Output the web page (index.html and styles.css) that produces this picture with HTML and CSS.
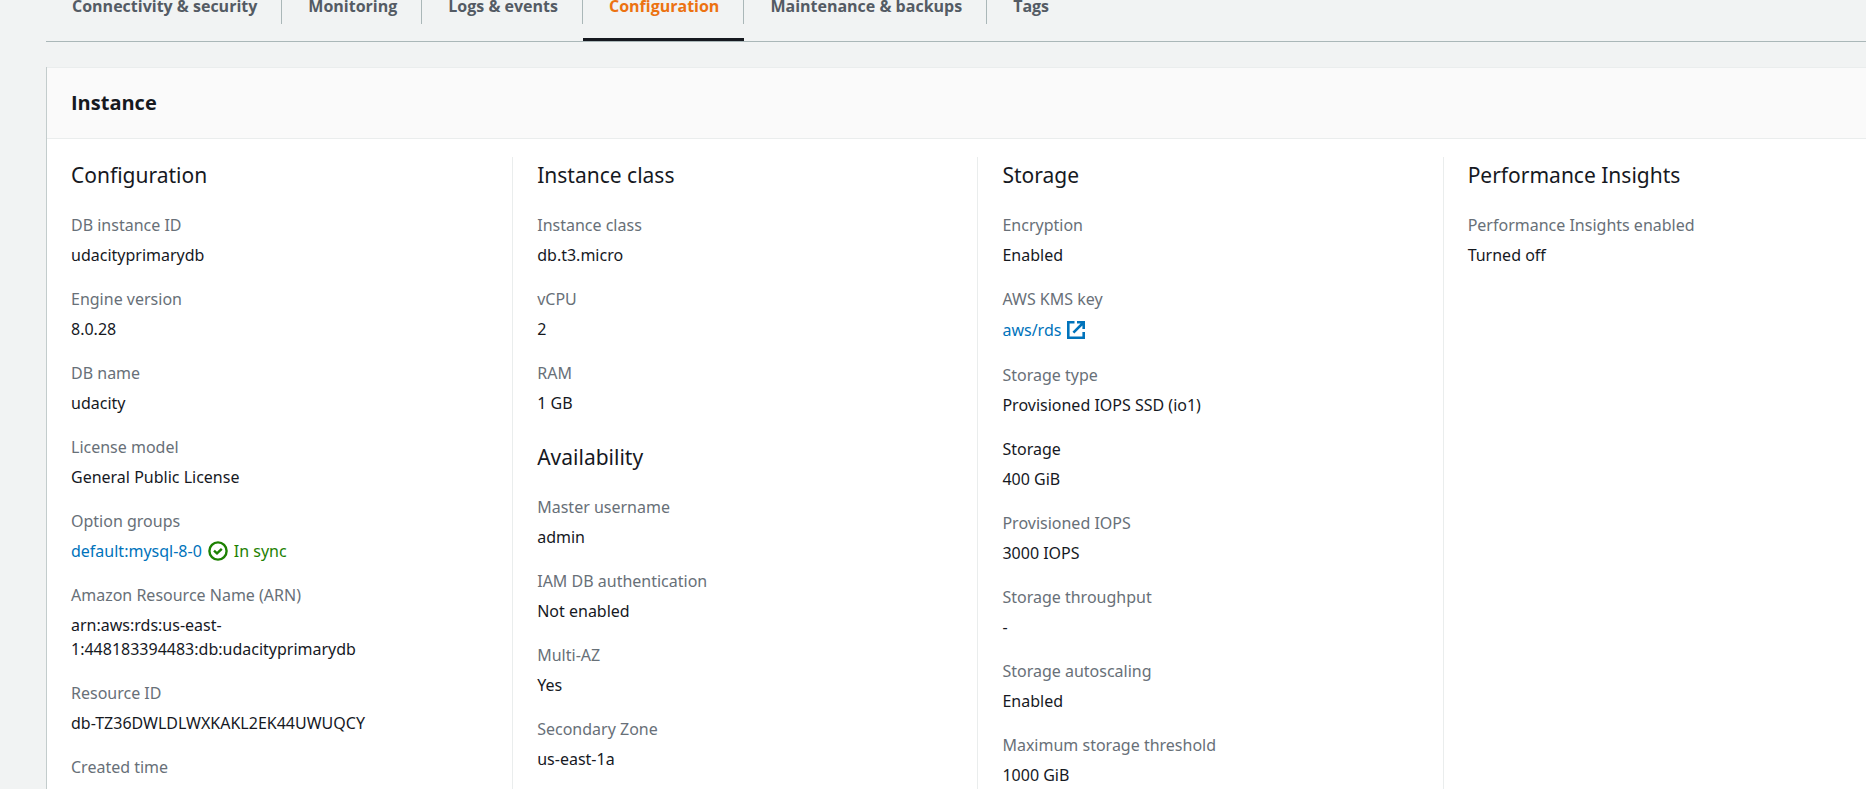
FILE: index.html
```
<!DOCTYPE html>
<html lang="en">
<head>
<meta charset="utf-8">
<title>Instance configuration</title>
<link rel="stylesheet" href="styles.css">
</head>
<body>
<main class="page">
  <nav class="tabs" aria-label="Database details">
    <button class="tab" type="button"><span class="tab-label">Connectivity &amp; security</span></button>
    <button class="tab" type="button"><span class="tab-label">Monitoring</span></button>
    <button class="tab" type="button"><span class="tab-label">Logs &amp; events</span></button>
    <button class="tab tab-active" type="button" aria-current="page"><span class="tab-label">Configuration</span></button>
    <button class="tab" type="button"><span class="tab-label">Maintenance &amp; backups</span></button>
    <button class="tab" type="button"><span class="tab-label">Tags</span></button>
  </nav>

  <section class="panel">
    <header class="panel-header"><h2 class="panel-title">Instance</h2></header>
    <div class="columns">
      <div class="column">
        <h3 class="group-title">Configuration</h3>
        <dl class="fields">
          <div class="field"><dt>DB instance ID</dt><dd>udacityprimarydb</dd></div>
          <div class="field"><dt>Engine version</dt><dd>8.0.28</dd></div>
          <div class="field"><dt>DB name</dt><dd>udacity</dd></div>
          <div class="field"><dt>License model</dt><dd>General Public License</dd></div>
          <div class="field"><dt>Option groups</dt><dd class="inline"><a class="link" href="#">default:mysql-8-0</a><svg class="icon-check" viewBox="0 0 20 20" aria-hidden="true"><circle cx="10" cy="10" r="8.6"/><path d="M6 9.6l3 2.8 4.8-4.6"/></svg><span class="success">In sync</span></dd></div>
          <div class="field"><dt>Amazon Resource Name (ARN)</dt><dd>arn:aws:rds:us-east-<br>1:448183394483:db:udacityprimarydb</dd></div>
          <div class="field"><dt>Resource ID</dt><dd>db-TZ36DWLDLWXKAKL2EK44UWUQCY</dd></div>
          <div class="field"><dt>Created time</dt></div>
        </dl>
      </div>
      <div class="column">
        <h3 class="group-title">Instance class</h3>
        <dl class="fields">
          <div class="field"><dt>Instance class</dt><dd>db.t3.micro</dd></div>
          <div class="field"><dt>vCPU</dt><dd>2</dd></div>
          <div class="field"><dt>RAM</dt><dd>1 GB</dd></div>
        </dl>
        <h3 class="group-title group-next">Availability</h3>
        <dl class="fields">
          <div class="field"><dt>Master username</dt><dd>admin</dd></div>
          <div class="field"><dt>IAM DB authentication</dt><dd>Not enabled</dd></div>
          <div class="field"><dt>Multi-AZ</dt><dd>Yes</dd></div>
          <div class="field"><dt>Secondary Zone</dt><dd>us-east-1a</dd></div>
        </dl>
      </div>
      <div class="column">
        <h3 class="group-title">Storage</h3>
        <dl class="fields">
          <div class="field"><dt>Encryption</dt><dd>Enabled</dd></div>
          <div class="field"><dt>AWS KMS key</dt><dd class="inline inline-tall"><a class="link inline" href="#">aws/rds<svg class="icon-external" viewBox="0 0 18 18" aria-hidden="true"><path d="M7.5 1.3H1.3v15.4h15.4V11M10 1.3h6.7V8M16.5 1.5L6.4 11.6"/></svg></a></dd></div>
          <div class="field"><dt>Storage type</dt><dd>Provisioned IOPS SSD (io1)</dd></div>
          <div class="field"><dt class="strong">Storage</dt><dd>400 GiB</dd></div>
          <div class="field"><dt>Provisioned IOPS</dt><dd>3000 IOPS</dd></div>
          <div class="field"><dt>Storage throughput</dt><dd>-</dd></div>
          <div class="field"><dt>Storage autoscaling</dt><dd>Enabled</dd></div>
          <div class="field"><dt>Maximum storage threshold</dt><dd>1000 GiB</dd></div>
        </dl>
      </div>
      <div class="column">
        <h3 class="group-title">Performance Insights</h3>
        <dl class="fields">
          <div class="field"><dt>Performance Insights enabled</dt><dd>Turned off</dd></div>
        </dl>
      </div>
    </div>
  </section>
</main>
</body>
</html>
```

FILE: styles.css
```
* { box-sizing: border-box; }
html, body { height: 100%; }
body {
  margin: 0;
  overflow: hidden;
  background: #f1f3f3;
  color: #16191f;
  font: 16px/24px "Noto Sans", "Open Sans", sans-serif;
}
.page {
  display: flex;
  flex-direction: column;
  min-height: 100%;
  padding-left: 46px;
}
.tabs {
  display: flex;
  border-bottom: 1px solid #aab7b8;
}
.tab {
  padding: 0 0 14px;
  border: 0;
  border-bottom: 3px solid transparent;
  background: none;
  color: #545b64;
  font: 700 16px/12px "Open Sans", "Noto Sans", sans-serif;
  cursor: pointer;
}
.tab-label {
  display: block;
  padding: 0 24px 12px 26px;
  border-right: 1px solid #aab7b8;
}
.tab:last-child .tab-label { border-right: 0; }
.tab-active { border-bottom-color: #16191f; color: #ec7211; }
.panel {
  display: flex;
  flex-direction: column;
  flex: 1;
  margin-top: 25px;
  border-left: 1px solid #c3cccc;
  background: #fff;
}
.panel-header {
  padding: 21px 24px;
  border-top: 1px solid #eaeded;
  border-bottom: 1px solid #eaeded;
  background: #fafafa;
}
.panel-title { margin: 0; font: 700 20px/28px "Open Sans", sans-serif; }
.columns {
  display: grid;
  grid-template-columns: repeat(3, 1fr) 0.91fr;
  flex: 1;
  padding-top: 18px;
}
.column { padding: 4px 24px 0; }
.column + .column { border-left: 1px solid #eaeded; }
.group-title { margin: 0 0 24px; font-size: 21px; font-weight: 400; line-height: 28px; }
.group-next { margin-top: 28px; }
.fields { display: flex; flex-direction: column; gap: 20px; margin: 0; }
.field { display: flex; flex-direction: column; gap: 6px; }
dt { color: #687078; }
dd { margin: 0; }
.strong { color: #16191f; }
.inline { display: flex; align-items: center; gap: 6px; }
.inline-tall { min-height: 26px; }
.link { color: #0073bb; text-decoration: none; }
.success { color: #1d8102; }
.icon-check, .icon-external { flex: none; fill: none; }
.icon-check { width: 20px; height: 20px; stroke: #1d8102; stroke-width: 2.4; }
.icon-external { width: 18px; height: 18px; stroke: #0073bb; stroke-width: 2.6; }
```
